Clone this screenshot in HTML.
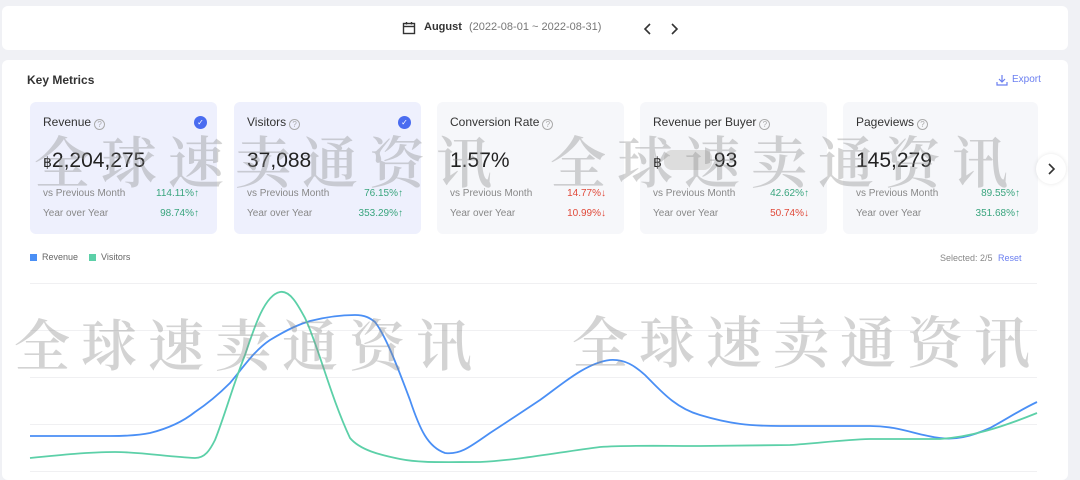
<!DOCTYPE html>
<html><head><meta charset="utf-8"><style>
*{margin:0;padding:0;box-sizing:border-box}
body{width:1080px;height:474px;background:#f0f1f5;font-family:"Liberation Sans",sans-serif;position:relative;overflow:hidden}
.top{position:absolute;left:2px;top:6px;width:1066px;height:44px;background:#fff;border-radius:6px}
.main{position:absolute;left:2px;top:60px;width:1066px;height:420px;background:#fff;border-radius:6px}
.abs{position:absolute}
.card{position:absolute;top:102px;width:187px;height:132px;border-radius:6px;background:#f6f7fa}
.card.sel{background:#eef0fd}
.card .t{position:absolute;left:13px;top:13px;font-size:12px;color:#333}
.q{display:inline-block;width:11px;height:11px;border:1px solid #aaa;border-radius:50%;font-size:8px;color:#aaa;text-align:center;line-height:9px;vertical-align:-1px;margin-left:3px}
.card .v{position:absolute;left:13px;top:47px;font-size:21px;color:#222}
.card .r1,.card .r2{position:absolute;left:13px;right:18px;font-size:10px;color:#888;display:flex;justify-content:space-between}
.r1{top:86px}.r2{top:106px}
.up{color:#3aa57e}.dn{color:#e04a3a}
.chk{position:absolute;right:10px;top:14px;width:13px;height:13px;border-radius:50%;background:#4a6cf0;color:#fff;font-size:8px;text-align:center;line-height:13px}
.wm{position:absolute;font-family:"Noto Serif CJK SC",serif;font-weight:600;font-size:56px;letter-spacing:11px;color:rgba(140,140,140,0.38);white-space:nowrap}
</style></head><body>
<div class="top"></div>
<div class="main"></div>
<svg class="abs" style="left:402px;top:21px" width="14" height="14" viewBox="0 0 14 14"><rect x="1.5" y="2.5" width="11" height="10" fill="none" stroke="#333" stroke-width="1.4"/><line x1="1.5" y1="5.5" x2="12.5" y2="5.5" stroke="#333" stroke-width="1.4"/><line x1="4.5" y1="1" x2="4.5" y2="3.5" stroke="#333" stroke-width="1.4"/><line x1="9.5" y1="1" x2="9.5" y2="3.5" stroke="#333" stroke-width="1.4"/></svg>
<div class="abs" style="left:424px;top:21px;font-size:11px;font-weight:bold;color:#333">August</div>
<div class="abs" style="left:469px;top:21px;font-size:11px;color:#777">(2022-08-01 ~ 2022-08-31)</div>
<svg class="abs" style="left:640px;top:22px" width="44" height="14"><path d="M10 2 L5 7 L10 12" fill="none" stroke="#333" stroke-width="1.6"/><path d="M32 2 L37 7 L32 12" fill="none" stroke="#333" stroke-width="1.6"/></svg>
<div class="abs" style="left:27px;top:73px;font-size:12px;font-weight:bold;color:#333">Key Metrics</div>
<svg class="abs" style="left:996px;top:74px" width="12" height="12"><path d="M6 1v7M3 5l3 3 3-3M1 8v3h10V8" fill="none" stroke="#6b7ff0" stroke-width="1.2"/></svg>
<div class="abs" style="left:1012px;top:74px;font-size:10px;color:#6b7ff0">Export</div>

<div class="card sel" style="left:30px"><div class="t">Revenue<span class="q">?</span></div><div class="chk">✓</div><div class="v"><span style="font-size:14px">฿</span>2,204,275</div><div class="r1"><span>vs Previous Month</span><span class="up">114.11%↑</span></div><div class="r2"><span>Year over Year</span><span class="up">98.74%↑</span></div></div>
<div class="card sel" style="left:234px"><div class="t">Visitors<span class="q">?</span></div><div class="chk">✓</div><div class="v">37,088</div><div class="r1"><span>vs Previous Month</span><span class="up">76.15%↑</span></div><div class="r2"><span>Year over Year</span><span class="up">353.29%↑</span></div></div>
<div class="card" style="left:437px"><div class="t">Conversion Rate<span class="q">?</span></div><div class="v">1.57%</div><div class="r1"><span>vs Previous Month</span><span class="dn">14.77%↓</span></div><div class="r2"><span>Year over Year</span><span class="dn">10.99%↓</span></div></div>
<div class="card" style="left:640px"><div class="t">Revenue per Buyer<span class="q">?</span></div><div class="v"><span style="font-size:14px">฿</span><span style="display:inline-block;width:48px;height:20px;background:#ddd;border-radius:8px;vertical-align:-3px;margin:0 2px"></span>93</div><div class="r1"><span>vs Previous Month</span><span class="up">42.62%↑</span></div><div class="r2"><span>Year over Year</span><span class="dn">50.74%↓</span></div></div>
<div class="card" style="left:843px;width:195px"><div class="t">Pageviews<span class="q">?</span></div><div class="v">145,279</div><div class="r1"><span>vs Previous Month</span><span class="up">89.55%↑</span></div><div class="r2"><span>Year over Year</span><span class="up">351.68%↑</span></div></div>
<div class="abs" style="left:1036px;top:154px;width:30px;height:30px;border-radius:50%;background:#fff;box-shadow:0 0 4px rgba(0,0,0,.1)"></div>
<svg class="abs" style="left:1046px;top:162px" width="12" height="14"><path d="M3 2l5 5-5 5" fill="none" stroke="#333" stroke-width="1.6"/></svg>

<div class="abs" style="left:30px;top:254px;width:7px;height:7px;background:#4a8ff5"></div>
<div class="abs" style="left:42px;top:252px;font-size:9px;color:#666">Revenue</div>
<div class="abs" style="left:89px;top:254px;width:7px;height:7px;background:#5cd0a8"></div>
<div class="abs" style="left:101px;top:252px;font-size:9px;color:#666">Visitors</div>
<div class="abs" style="left:940px;top:253px;font-size:9px;color:#888">Selected: 2/5 <span style="color:#6b7ff0;margin-left:3px">Reset</span></div>

<svg class="abs" style="left:0;top:0" width="1080" height="474">
<g stroke="#f0f0f2" stroke-width="1"><line x1="30" y1="283.5" x2="1037" y2="283.5"/><line x1="30" y1="330.5" x2="1037" y2="330.5"/><line x1="30" y1="377.5" x2="1037" y2="377.5"/><line x1="30" y1="424.5" x2="1037" y2="424.5"/><line x1="30" y1="471.5" x2="1037" y2="471.5"/></g>
<path d="M30 436 L110 436 C130 436 140 435 150 433 C170 428 185 420 195 412 C210 402 220 393 230 383 C245 365 255 350 270 340 C290 328 300 324 310 321 C330 316 345 315 355 315 C365 315 370 318 375 322 C385 335 395 360 410 400 C420 430 428 447 445 453 C460 455 470 447 490 433 C510 420 525 410 540 400 C560 386 585 363 610 360 C625 359 635 366 645 375 C660 390 675 408 700 415 C730 424 750 426 780 426 L870 426 C900 426 915 435 940 438 C955 440 970 437 990 428 C1005 420 1020 410 1037 402" fill="none" stroke="#4a8ff5" stroke-width="1.8"/>
<path d="M30 458 C60 455 90 452 115 452 C140 452 170 457 195 458 C205 458 210 450 215 440 C225 415 233 385 245 355 C255 325 265 295 280 292 C290 290 298 305 305 318 C318 345 330 395 350 438 C360 450 380 455 400 459 C420 463 440 462 480 462 C520 460 560 452 600 447 C630 445 660 446 700 446 L790 445 C820 443 840 440 870 439 L940 439 C970 437 1000 428 1037 413" fill="none" stroke="#5cd0a8" stroke-width="1.8"/>
</svg>

<div class="wm" style="left:34px;top:120px">全球速卖通资讯</div>
<div class="wm" style="left:550px;top:120px">全球速卖通资讯</div>
<div class="wm" style="left:14px;top:303px">全球速卖通资讯</div>
<div class="wm" style="left:572px;top:300px">全球速卖通资讯</div>
</body></html>
